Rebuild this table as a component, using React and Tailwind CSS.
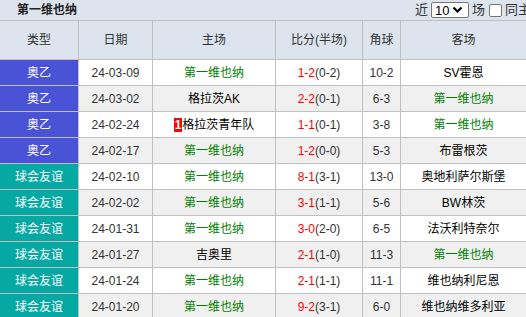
import React from "react";

const rows = [
  { t: "奥乙", c: "b", d: "24-03-09", h: "第一维也纳", hg: true, s: "1-2", hf: "(0-2)", k: "10-2", a: "SV霍恩", ag: false },
  { t: "奥乙", c: "b", d: "24-03-02", h: "格拉茨AK", hg: false, s: "2-2", hf: "(0-1)", k: "6-3", a: "第一维也纳", ag: true },
  { t: "奥乙", c: "b", d: "24-02-24", h: "格拉茨青年队", hg: false, badge: "1", s: "1-1", hf: "(0-1)", k: "3-8", a: "第一维也纳", ag: true },
  { t: "奥乙", c: "b", d: "24-02-17", h: "第一维也纳", hg: true, s: "1-2", hf: "(0-0)", k: "5-3", a: "布雷根茨", ag: false },
  { t: "球会友谊", c: "t", d: "24-02-10", h: "第一维也纳", hg: true, s: "8-1", hf: "(3-1)", k: "13-0", a: "奥地利萨尔斯堡", ag: false },
  { t: "球会友谊", c: "t", d: "24-02-02", h: "第一维也纳", hg: true, s: "3-1", hf: "(1-1)", k: "5-6", a: "BW林茨", ag: false },
  { t: "球会友谊", c: "t", d: "24-01-31", h: "第一维也纳", hg: true, s: "3-0", hf: "(2-0)", k: "6-5", a: "法沃利特奈尔", ag: false },
  { t: "球会友谊", c: "t", d: "24-01-27", h: "吉奥里", hg: false, s: "2-1", hf: "(1-0)", k: "11-3", a: "第一维也纳", ag: true },
  { t: "球会友谊", c: "t", d: "24-01-24", h: "第一维也纳", hg: true, s: "2-1", hf: "(1-1)", k: "11-1", a: "维也纳利尼恩", ag: false },
  { t: "球会友谊", c: "t", d: "24-01-20", h: "第一维也纳", hg: true, s: "9-2", hf: "(3-1)", k: "6-0", a: "维也纳维多利亚", ag: false },
];

const font = { fontFamily: '"Liberation Sans", "Noto Sans CJK SC", sans-serif' };

export default function App() {
  return (
    <div className="w-[526px] h-[317px] overflow-hidden bg-white text-[12px] text-[#333]" style={font}>
      <div className="h-[21px] bg-[#dde4ee] border-b border-[#c0c0c0] flex items-center overflow-hidden">
        <div className="pl-[17px] font-bold text-[#222] text-[12px] leading-none">第一维也纳</div>
        <div className="ml-auto mr-[-5px] flex items-center text-[13px] text-[#333] whitespace-nowrap">
          <span>近</span>
          <div className="ml-[3px] w-[38px] h-[16px] bg-white border border-[#767676] rounded-[2px] flex items-center pl-[3px] text-[13px] text-black">
            <span className="leading-none">10</span>
            <svg width="11" height="8" viewBox="0 0 11 8" className="ml-[3px]">
              <path d="M1.5 1.5 L5.5 5.5 L9.5 1.5" stroke="#000" strokeWidth="2.2" fill="none" />
            </svg>
          </div>
          <span className="ml-[3px]">场</span>
          <div className="ml-[4px] w-[13px] h-[13px] bg-white border border-[#767676] rounded-[2px]" />
          <span className="ml-[3px]">同主</span>
        </div>
      </div>
      <div className="h-[39px] bg-[#dde4ee] border-b border-[#c0c0c0] flex text-[#333]">
        <div className="w-[79px] border-r border-[#c0c0c0] flex items-center justify-center">类型</div>
        <div className="w-[74px] border-r border-[#c0c0c0] flex items-center justify-center">日期</div>
        <div className="w-[123px] border-r border-[#c0c0c0] flex items-center justify-center">主场</div>
        <div className="w-[87px] border-r border-[#c0c0c0] flex items-center justify-center">比分(半场)</div>
        <div className="w-[38px] border-r border-[#c0c0c0] flex items-center justify-center">角球</div>
        <div className="flex-1 flex items-center justify-center">客场</div>
      </div>
      {rows.map((r, i) => (
        <div key={i} className={`h-[26px] border-b border-[#c0c0c0] flex ${i % 2 === 0 ? "bg-white" : "bg-[#f0f0f0]"}`}>
          <div className={`w-[79px] border-r border-[#c0c0c0] flex items-center justify-center text-white ${r.c === "b" ? "bg-[#4a52d6]" : "bg-[#06a8a4]"}`}>{r.t}</div>
          <div className="w-[74px] border-r border-[#c0c0c0] flex items-center justify-center text-[#333]">{r.d}</div>
          <div className={`w-[123px] border-r border-[#c0c0c0] flex items-center justify-center ${r.hg ? "text-[#008000]" : "text-black"}`}>
            {r.badge && <span className="bg-[#ff0000] text-white font-bold px-[1px] leading-[14px]">{r.badge}</span>}
            {r.h}
          </div>
          <div className="w-[87px] border-r border-[#c0c0c0] flex items-center justify-center">
            <span className="text-[#ff0000]">{r.s}</span>
            <span className="text-[#333]">{r.hf}</span>
          </div>
          <div className="w-[38px] border-r border-[#c0c0c0] flex items-center justify-center text-[#333]">{r.k}</div>
          <div className={`flex-1 flex items-center justify-center ${r.ag ? "text-[#008000]" : "text-black"}`}>{r.a}</div>
        </div>
      ))}
    </div>
  );
}
